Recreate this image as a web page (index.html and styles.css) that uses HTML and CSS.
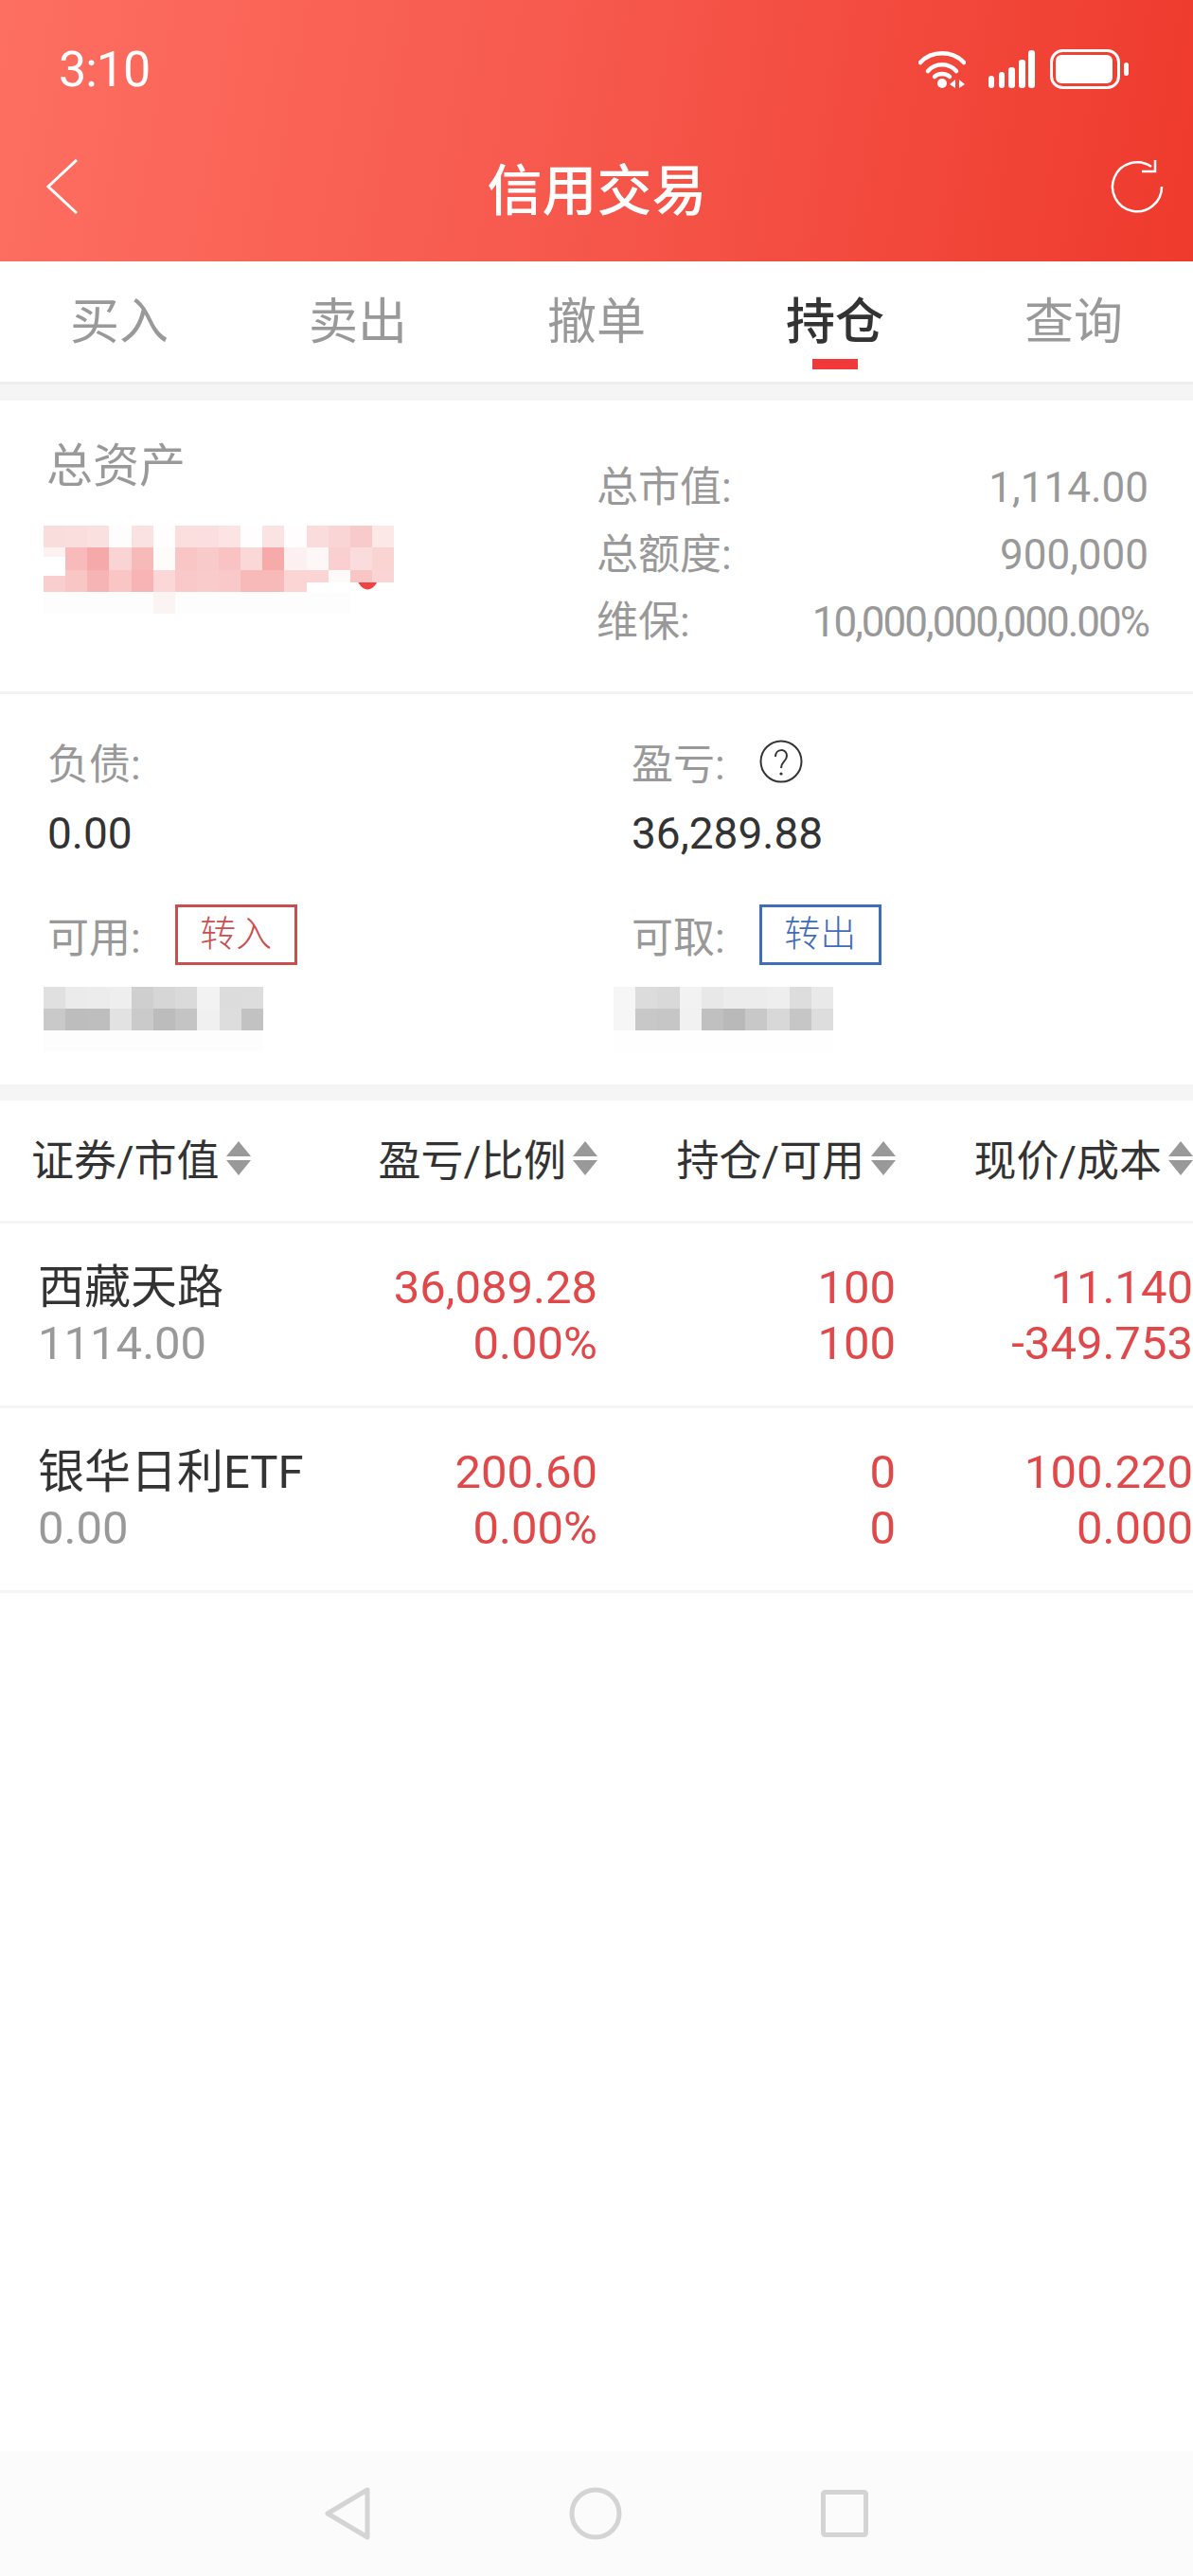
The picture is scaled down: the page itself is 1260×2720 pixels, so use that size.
FILE: index.html
```html
<!DOCTYPE html>
<html lang="zh-CN">
<head>
    <meta charset="UTF-8">
    <meta name="viewport" content="width=device-width, initial-scale=1.0">
    <title>信用交易</title>
    <link rel="stylesheet" href="styles.css">
</head>
<body>
    <div class="screen">
        <header class="top">
            <div class="status-bar">
                <span class="time">3:10</span>
                <div class="status-icons">
                    <svg class="wifi" width="50" height="42" viewBox="0 0 50 42">
                        <path d="M2 14 C14 1 36 1 48 14" fill="none" stroke="#fff" stroke-width="4.5" stroke-linecap="round"/>
                        <path d="M10 23 C18 14 32 14 40 23" fill="none" stroke="#fff" stroke-width="4.5" stroke-linecap="round"/>
                        <path d="M17 29 C21 25 29 25 33 29" fill="none" stroke="#fff" stroke-width="4.5" stroke-linecap="round"/>
                        <circle cx="25" cy="36" r="5" fill="#fff"/>
                        <path d="M39 32 L33 37 L39 41 Z M43 32 L49 37 L43 41 Z" fill="#fff"/>
                    </svg>
                    <svg class="signal" width="49" height="40" viewBox="0 0 49 40">
                        <rect x="0" y="27" width="6" height="13" rx="3" fill="#fff"/>
                        <rect x="11" y="23" width="6" height="17" rx="3" fill="#fff"/>
                        <rect x="21" y="18" width="7" height="22" rx="3" fill="#fff"/>
                        <rect x="32" y="10" width="7" height="30" rx="3" fill="#fff"/>
                        <rect x="42" y="0" width="7" height="40" rx="3" fill="#fff"/>
                    </svg>
                    <svg class="battery" width="84" height="42" viewBox="0 0 84 42">
                        <rect x="1.5" y="1.5" width="71" height="39" rx="12" fill="none" stroke="#fff" stroke-width="3"/>
                        <rect x="6" y="6" width="60" height="30" rx="6" fill="#fff"/>
                        <rect x="78" y="14" width="5" height="14" rx="2.5" fill="#fff"/>
                    </svg>
                </div>
            </div>
            <div class="title-bar">
                <svg class="back" width="34" height="58" viewBox="0 0 34 58">
                    <path d="M32 1 L2 29 L32 57" fill="none" stroke="#fff" stroke-width="3"/>
                </svg>
                <h1>信用交易</h1>
                <svg class="refresh" width="56" height="56" viewBox="0 0 56 56">
                    <path d="M54 28 A26 26 0 1 1 43 7" fill="none" stroke="#fff" stroke-width="2.5"/>
                    <path d="M33 12 H47 V0" fill="none" stroke="#fff" stroke-width="2.5"/>
                </svg>
            </div>
        </header>

        <nav class="tabs">
            <a class="tab">买入</a>
            <a class="tab">卖出</a>
            <a class="tab">撤单</a>
            <a class="tab active">持仓</a>
            <a class="tab">查询</a>
        </nav>

        <section class="summary">
            <div class="total">
                <div class="total-label">总资产</div>
                <svg class="mosaic-red" width="370" height="93" viewBox="0 0 16 4" preserveAspectRatio="none" shape-rendering="crispEdges">
                    <ellipse cx="14.8" cy="2" rx="0.56" ry="0.9" fill="#ef4444" shape-rendering="auto"/>
                    <g>
                        <rect x="0" y="0" width="1" height="1" fill="#f9dcdc"/><rect x="1" y="0" width="1" height="1" fill="#fadede"/><rect x="2" y="0" width="1" height="1" fill="#fbe0e0"/><rect x="3" y="0" width="1" height="1" fill="#fefcfc"/>
                        <rect x="4" y="0" width="1" height="1" fill="#fbe2e2"/><rect x="5" y="0" width="1" height="1" fill="#fffdfd"/><rect x="6" y="0" width="1" height="1" fill="#fbdfdf"/><rect x="7" y="0" width="1" height="1" fill="#fbdfe0"/>
                        <rect x="8" y="0" width="1" height="1" fill="#fce4e4"/><rect x="9" y="0" width="1" height="1" fill="#fffdfd"/><rect x="10" y="0" width="1" height="1" fill="#fae3e3"/><rect x="11" y="0" width="1" height="1" fill="#fffdfd"/>
                        <rect x="12" y="0" width="1" height="1" fill="#fadcdc"/><rect x="13" y="0" width="1" height="1" fill="#f9d5d5"/><rect x="14" y="0" width="1" height="1" fill="#f8caca"/><rect x="15" y="0" width="1" height="1" fill="#fde8e8"/>
                    </g>
                    <g>
                        <rect x="0" y="1" width="1" height="1" fill="#fdf2f2"/><rect x="1" y="1" width="1" height="1" fill="#f8baba"/><rect x="2" y="1" width="1" height="1" fill="#f6a9a9"/><rect x="3" y="1" width="1" height="1" fill="#fad4d4"/>
                        <rect x="4" y="1" width="1" height="1" fill="#f8b9b9"/><rect x="5" y="1" width="1" height="1" fill="#fefbfb"/><rect x="6" y="1" width="1" height="1" fill="#f9c6c6"/><rect x="7" y="1" width="1" height="1" fill="#f9caca"/>
                        <rect x="8" y="1" width="1" height="1" fill="#f9c3c3"/><rect x="9" y="1" width="1" height="1" fill="#fbd8d8"/><rect x="10" y="1" width="1" height="1" fill="#f6aaaa"/><rect x="11" y="1" width="1" height="1" fill="#fdf0f0"/>
                        <rect x="12" y="1" width="1" height="1" fill="#fef7f7"/><rect x="13" y="1" width="1" height="1" fill="#f9cfcf"/><rect x="14" y="1" width="1" height="1" fill="#fbdcdc"/><rect x="15" y="1" width="1" height="1" fill="#fad3d3"/>
                    </g>
                    <g>
                        <rect x="0" y="2" width="1" height="1" fill="#f9cece"/><rect x="1" y="2" width="1" height="1" fill="#f9c6c6"/><rect x="2" y="2" width="1" height="1" fill="#f7b4b4"/><rect x="3" y="2" width="1" height="1" fill="#f9c5c5"/>
                        <rect x="4" y="2" width="1" height="1" fill="#f8b4b4"/><rect x="5" y="2" width="1" height="1" fill="#fbd7d7"/><rect x="6" y="2" width="1" height="1" fill="#f9c9c9"/><rect x="7" y="2" width="1" height="1" fill="#facbcb"/>
                        <rect x="8" y="2" width="1" height="1" fill="#f9c9c9"/><rect x="9" y="2" width="1" height="1" fill="#f8b9b9"/><rect x="10" y="2" width="1" height="1" fill="#f8b9b9"/><rect x="11" y="2" width="1" height="1" fill="#fbd4d4"/>
                        <rect x="12" y="2" width="1" height="0.6" fill="#fbd4d4"/><rect x="13" y="2" width="1" height="0.6" fill="#fefafa"/><rect x="14" y="2" width="1" height="0.6" fill="#f9c6c6"/><rect x="15" y="2" width="1" height="0.6" fill="#fbd5d5"/>
                    </g>
                    <rect x="0" y="3" width="14" height="1" fill="#fefdfd"/>
                    <rect x="5" y="3" width="1" height="1" fill="#fcf3f3"/>
                    <rect x="0" y="1.4" width="1" height="0.9" fill="#ffffff"/>
                </svg>
            </div>
            <dl class="stats">
                <div class="stat"><dt>总市值:</dt><dd>1,114.00</dd></div>
                <div class="stat"><dt>总额度:</dt><dd>900,000</dd></div>
                <div class="stat"><dt>维保:</dt><dd class="long">10,000,000,000.00%</dd></div>
            </dl>
        </section>

        <section class="funds">
            <div class="fund">
                <div class="fund-label">负债:</div>
                <div class="fund-value">0.00</div>
            </div>
            <div class="fund">
                <div class="fund-label">盈亏:
                    <svg class="help" width="46" height="46" viewBox="0 0 46 46">
                        <circle cx="23" cy="23" r="21.5" fill="none" stroke="#333" stroke-width="2"/>
                        <path d="M17 18 C17 9 29 9 29 17 C29 23 23 23 23 30" fill="none" stroke="#333" stroke-width="2"/>
                        <circle cx="23" cy="36" r="1.6" fill="#333"/>
                    </svg>
                </div>
                <div class="fund-value">36,289.88</div>
            </div>
            <div class="fund">
                <div class="fund-label">可用: <a class="transfer in">转入</a></div>
                <svg class="mosaic-grey" width="232" height="69" viewBox="0 0 10 3" preserveAspectRatio="none" shape-rendering="crispEdges">
                    <rect x="0" y="0" width="1" height="1" fill="#e0e0e0"/><rect x="1" y="0" width="1" height="1" fill="#ebebeb"/><rect x="2" y="0" width="1" height="1" fill="#ececec"/><rect x="3" y="0" width="1" height="1" fill="#eeeeee"/><rect x="4" y="0" width="1" height="1" fill="#cfcfcf"/>
                    <rect x="5" y="0" width="1" height="1" fill="#d6d6d6"/><rect x="6" y="0" width="1" height="1" fill="#dadada"/><rect x="7" y="0" width="1" height="1" fill="#f2f2f2"/><rect x="8" y="0" width="1" height="1" fill="#dcdcdc"/><rect x="9" y="0" width="1" height="1" fill="#dddddd"/>
                    <rect x="0" y="1" width="1" height="1" fill="#c9c9c9"/><rect x="1" y="1" width="1" height="1" fill="#bdbdbd"/><rect x="2" y="1" width="1" height="1" fill="#bebebe"/><rect x="3" y="1" width="1" height="1" fill="#e2e2e2"/><rect x="4" y="1" width="1" height="1" fill="#cacaca"/>
                    <rect x="5" y="1" width="1" height="1" fill="#bcbcbc"/><rect x="6" y="1" width="1" height="1" fill="#c4c4c4"/><rect x="7" y="1" width="1" height="1" fill="#f0f0f0"/><rect x="8" y="1" width="1" height="1" fill="#dddddd"/><rect x="9" y="1" width="1" height="1" fill="#c2c2c2"/>
                    <rect x="0" y="2" width="10" height="1" fill="#fdfdfd"/>
                </svg>
            </div>
            <div class="fund">
                <div class="fund-label">可取: <a class="transfer out">转出</a></div>
                <svg class="mosaic-grey shifted" width="232" height="69" viewBox="0 0 10 3" preserveAspectRatio="none" shape-rendering="crispEdges">
                    <rect x="0" y="0" width="1" height="1" fill="#f6f6f6"/><rect x="1" y="0" width="1" height="1" fill="#dcdcdc"/><rect x="2" y="0" width="1" height="1" fill="#d9d9d9"/><rect x="3" y="0" width="1" height="1" fill="#f2f2f2"/><rect x="4" y="0" width="1" height="1" fill="#e8e8e8"/>
                    <rect x="5" y="0" width="1" height="1" fill="#ececec"/><rect x="6" y="0" width="1" height="1" fill="#ececec"/><rect x="7" y="0" width="1" height="1" fill="#eeeeee"/><rect x="8" y="0" width="1" height="1" fill="#dddddd"/><rect x="9" y="0" width="1" height="1" fill="#e9e9e9"/>
                    <rect x="0" y="1" width="1" height="1" fill="#f6f6f6"/><rect x="1" y="1" width="1" height="1" fill="#c8c8c8"/><rect x="2" y="1" width="1" height="1" fill="#c6c6c6"/><rect x="3" y="1" width="1" height="1" fill="#f1f1f1"/><rect x="4" y="1" width="1" height="1" fill="#c0c0c0"/>
                    <rect x="5" y="1" width="1" height="1" fill="#b9b9b9"/><rect x="6" y="1" width="1" height="1" fill="#c8c8c8"/><rect x="7" y="1" width="1" height="1" fill="#d8d8d8"/><rect x="8" y="1" width="1" height="1" fill="#c6c6c6"/><rect x="9" y="1" width="1" height="1" fill="#dddddd"/>
                    <rect x="0" y="2" width="10" height="1" fill="#fefefe"/>
                </svg>
            </div>
        </section>

        <section class="positions">
            <div class="row head">
                <div class="cell name">证券/市值<i class="sort"></i></div>
                <div class="cell">盈亏/比例<i class="sort"></i></div>
                <div class="cell">持仓/可用<i class="sort"></i></div>
                <div class="cell last">现价/成本<i class="sort"></i></div>
            </div>
            <div class="row item">
                <div class="cell name"><b>西藏天路</b><span class="muted">1114.00</span></div>
                <div class="cell"><span>36,089.28</span><span>0.00%</span></div>
                <div class="cell"><span>100</span><span>100</span></div>
                <div class="cell last"><span>11.140</span><span>-349.753</span></div>
            </div>
            <div class="row item">
                <div class="cell name"><b>银华日利ETF</b><span class="muted">0.00</span></div>
                <div class="cell"><span>200.60</span><span>0.00%</span></div>
                <div class="cell"><span>0</span><span>0</span></div>
                <div class="cell last"><span>100.220</span><span>0.000</span></div>
            </div>
        </section>

        <footer class="nav-bar">
            <svg width="48" height="56" viewBox="0 0 48 56">
                <path d="M45 3 L3 28 L45 53 Z" fill="none" stroke="#d4d4d4" stroke-width="5" stroke-linejoin="round"/>
            </svg>
            <svg width="56" height="56" viewBox="0 0 56 56">
                <circle cx="28" cy="28" r="25" fill="none" stroke="#d4d4d4" stroke-width="5"/>
            </svg>
            <svg width="50" height="50" viewBox="0 0 50 50">
                <rect x="2.5" y="2.5" width="45" height="45" rx="2" fill="none" stroke="#d4d4d4" stroke-width="5"/>
            </svg>
        </footer>
    </div>
</body>
</html>
```

FILE: styles.css
```css
* {
    box-sizing: border-box;
}
body {
    margin: 0;
    background: #fff;
    font-family: Roboto, "Noto Sans CJK SC", sans-serif;
    color: #333;
}
.screen {
    width: 1260px;
    height: 2720px;
    display: flex;
    flex-direction: column;
    overflow: hidden;
}

/* red header */
.top {
    height: 276px;
    background: linear-gradient(100deg, #fd6f61 0%, #f75a4e 45%, #ee3a2d 100%);
    color: #fff;
}
.status-bar {
    height: 146px;
    padding: 0 67px 0 62px;
    display: flex;
    justify-content: space-between;
    align-items: center;
}
.time {
    font-size: 52px;
    letter-spacing: -1px;
}
.status-icons {
    display: flex;
    align-items: flex-end;
    gap: 24px;
    padding-bottom: 1px;
}
.signal {
    margin-bottom: 1px;
}
.battery {
    margin-left: -8px;
}
.title-bar {
    height: 108px;
    padding: 0 31px 6px 49px;
    display: flex;
    justify-content: space-between;
    align-items: center;
}
.title-bar h1 {
    margin: 0 0 0 5px;
    font-size: 58px;
    font-weight: 500;
}

/* tabs */
.tabs {
    height: 130px;
    display: flex;
    border-bottom: 3px solid #eeeeee;
}
.tab {
    position: relative;
    flex: 1;
    padding-top: 34px;
    text-align: center;
    font-size: 52px;
    line-height: 62px;
    color: #999;
}
.tab.active {
    color: #333;
    font-weight: 500;
}
.tab.active::after {
    content: "";
    position: absolute;
    left: 102px;
    top: 103px;
    width: 48px;
    height: 11px;
    background: #f03a3a;
}

/* total assets */
.summary {
    height: 310px;
    margin-top: 17px;
    padding: 0 47px 0 46px;
    display: flex;
    justify-content: space-between;
    box-shadow: 0 -17px 0 #f5f5f5;
    border-bottom: 3px solid #f2f2f2;
}
.total-label {
    margin: 40px 0 0 3px;
    font-size: 49px;
    line-height: 60px;
    color: #999;
}
.mosaic-red,
.mosaic-grey {
    display: block;
}
.mosaic-red {
    margin-top: 32px;
}
.stats {
    width: 583px;
    margin: 62px 0 0;
}
.stat {
    display: flex;
    justify-content: space-between;
    height: 71px;
    font-size: 44px;
    line-height: 60px;
    color: #999;
}
.stat dd {
    margin: 0;
}
.stat dd.long {
    letter-spacing: -2px;
}

/* debt, profit, transfer */
.funds {
    height: 412px;
    padding: 44px 0 0 50px;
    display: grid;
    grid-template-columns: 617px 1fr;
    grid-template-rows: 183px 1fr;
    align-content: start;
}
.fund-label {
    display: flex;
    align-items: center;
    height: 54px;
    gap: 36px;
    font-size: 44px;
    color: #999;
}
.fund-value {
    margin-top: 22px;
    font-size: 46px;
    line-height: 54px;
    color: #333;
}
.transfer {
    width: 129px;
    height: 64px;
    border: 3px solid;
    text-align: center;
    font-size: 38px;
    font-weight: 300;
    line-height: 56px;
}
.transfer.in {
    color: #c94f4f;
}
.transfer.out {
    color: #3f6db8;
}
.mosaic-grey {
    margin: 28px 0 0 -4px;
}
.mosaic-grey.shifted {
    margin-left: -19px;
}

/* holdings */
.positions {
    border-top: 17px solid #f5f5f5;
}
.row {
    display: grid;
    grid-template-columns: 350px 282px 315px 313px;
    border-bottom: 3px solid #f5f5f5;
}
.head {
    height: 130px;
    padding-bottom: 6px;
    align-items: center;
    font-size: 45px;
}
.head .cell {
    display: flex;
    justify-content: flex-end;
    align-items: center;
}
.head .cell.name {
    justify-content: flex-start;
    padding-left: 33px;
}
.head .cell.last {
    padding-right: 0;
    white-space: nowrap;
}
.cell {
    padding-right: 1px;
    text-align: right;
}
.cell.last {
    padding-right: 0;
}
.sort {
    position: relative;
    flex: none;
    width: 26px;
    height: 36px;
    margin-left: 7px;
}
.sort::before,
.sort::after {
    content: "";
    position: absolute;
    left: 0;
    border-left: 13px solid transparent;
    border-right: 13px solid transparent;
}
.sort::before {
    top: 0;
    border-bottom: 16px solid #999;
}
.sort::after {
    bottom: 0;
    border-top: 16px solid #999;
}
.item {
    height: 195px;
    padding-top: 2px;
    align-content: center;
    font-size: 49px;
    line-height: 59px;
    color: #e0484a;
}
.item .cell span,
.item .cell b {
    display: block;
}
.item .cell.name {
    padding-left: 40px;
    text-align: left;
    white-space: nowrap;
    color: #333;
}
.item b {
    font-weight: 400;
}
.muted {
    color: #999;
}

/* system nav */
.nav-bar {
    height: 132px;
    margin-top: auto;
    background: #fbfbfb;
    display: flex;
    align-items: center;
    padding: 0 343px 0 343px;
    justify-content: space-between;
}
```
